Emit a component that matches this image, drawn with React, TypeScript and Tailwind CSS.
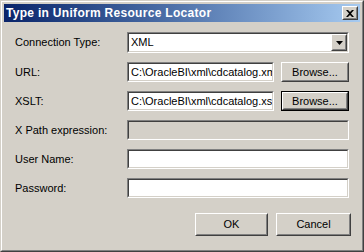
import React from "react";

const font = { fontFamily: '"Liberation Sans", Arial, sans-serif' };

function Raised({ children, className = "" }: { children?: React.ReactNode; className?: string }) {
  return (
    <div className={`border border-t-white border-l-white border-r-[#404040] border-b-[#404040] ${className}`}>
      <div className="w-full h-full border border-t-[#D4D0C8] border-l-[#D4D0C8] border-r-[#808080] border-b-[#808080] bg-[#D4D0C8] flex items-center justify-center">
        {children}
      </div>
    </div>
  );
}

function Sunken({ children, className = "", disabled = false }: { children?: React.ReactNode; className?: string; disabled?: boolean }) {
  return (
    <div className={`border border-t-[#808080] border-l-[#808080] border-r-white border-b-white ${className}`}>
      <div
        className={`w-full h-full border border-t-[#404040] border-l-[#404040] border-r-[#D4D0C8] border-b-[#D4D0C8] ${disabled ? "bg-[#D4D0C8]" : "bg-white"} flex items-center overflow-hidden`}
      >
        {children}
      </div>
    </div>
  );
}

function Label({ children }: { children: React.ReactNode }) {
  return <div className="w-[123px] shrink-0 pl-[11px] text-[11px] text-black leading-none">{children}</div>;
}

export default function App() {
  return (
    <div className="w-[364px] h-[252px] bg-[#D4D0C8]" style={font}>
      <div className="w-full h-full border border-t-[#D4D0C8] border-l-[#D4D0C8] border-r-[#404040] border-b-[#404040]">
        <div className="w-full h-full border border-t-white border-l-white border-r-[#808080] border-b-[#808080] p-[2px] flex flex-col">
          {/* Title bar */}
          <div className="h-[18px] shrink-0 bg-gradient-to-r from-[#0A246A] to-[#A6CAF0] flex items-center justify-between pl-[2px] pr-[2px]">
            <span className="text-white font-bold text-[12px] tracking-[0.3px] leading-none">Type in Uniform Resource Locator</span>
            <Raised className="w-[16px] h-[14px]">
              <svg width="8" height="7" viewBox="0 0 8 7">
                <path d="M0 0h2l2 2 2-2h2L5 3.5 8 7H6L4 5 2 7H0l3-3.5z" fill="#000" />
              </svg>
            </Raised>
          </div>

          {/* Form */}
          <div className="flex flex-col gap-[9px] mt-[10px]">
            <div className="flex items-center h-[21px]">
              <Label>Connection Type:</Label>
              <Sunken className="w-[222px] h-[21px]">
                <div className="flex-1 pl-[2px] text-[11px] leading-none">XML</div>
                <Raised className="w-[16px] h-[17px]">
                  <svg width="7" height="4" viewBox="0 0 7 4">
                    <path d="M0 0h7L3.5 4z" fill="#000" />
                  </svg>
                </Raised>
              </Sunken>
            </div>

            <div className="flex items-center h-[20px]">
              <Label>URL:</Label>
              <Sunken className="w-[147px] h-[20px]">
                <div className="pl-[2px] text-[11px] leading-none whitespace-nowrap">C:\OracleBI\xml\cdcatalog.xml</div>
              </Sunken>
              <Raised className="w-[68px] h-[20px] ml-[7px]">
                <span className="text-[11px] leading-none">Browse...</span>
              </Raised>
            </div>

            <div className="flex items-center h-[20px]">
              <Label>XSLT:</Label>
              <Sunken className="w-[147px] h-[20px]">
                <div className="pl-[2px] text-[11px] leading-none whitespace-nowrap">C:\OracleBI\xml\cdcatalog.xsl</div>
              </Sunken>
              <div className="w-[68px] h-[20px] ml-[7px] border border-black">
                <Raised className="w-full h-full">
                  <span className="text-[11px] leading-none">Browse...</span>
                </Raised>
              </div>
            </div>

            <div className="flex items-center h-[20px]">
              <Label>X Path expression:</Label>
              <Sunken className="w-[222px] h-[20px]" disabled />
            </div>

            <div className="flex items-center h-[20px]">
              <Label>User Name:</Label>
              <Sunken className="w-[222px] h-[20px]" />
            </div>

            <div className="flex items-center h-[20px]">
              <Label>Password:</Label>
              <Sunken className="w-[222px] h-[20px]" />
            </div>
          </div>

          <div className="flex justify-end gap-[8px] mt-[15px] pr-[9px]">
            <Raised className="w-[73px] h-[23px]">
              <span className="text-[11px] leading-none">OK</span>
            </Raised>
            <Raised className="w-[75px] h-[23px]">
              <span className="text-[11px] leading-none">Cancel</span>
            </Raised>
          </div>
        </div>
      </div>
    </div>
  );
}
